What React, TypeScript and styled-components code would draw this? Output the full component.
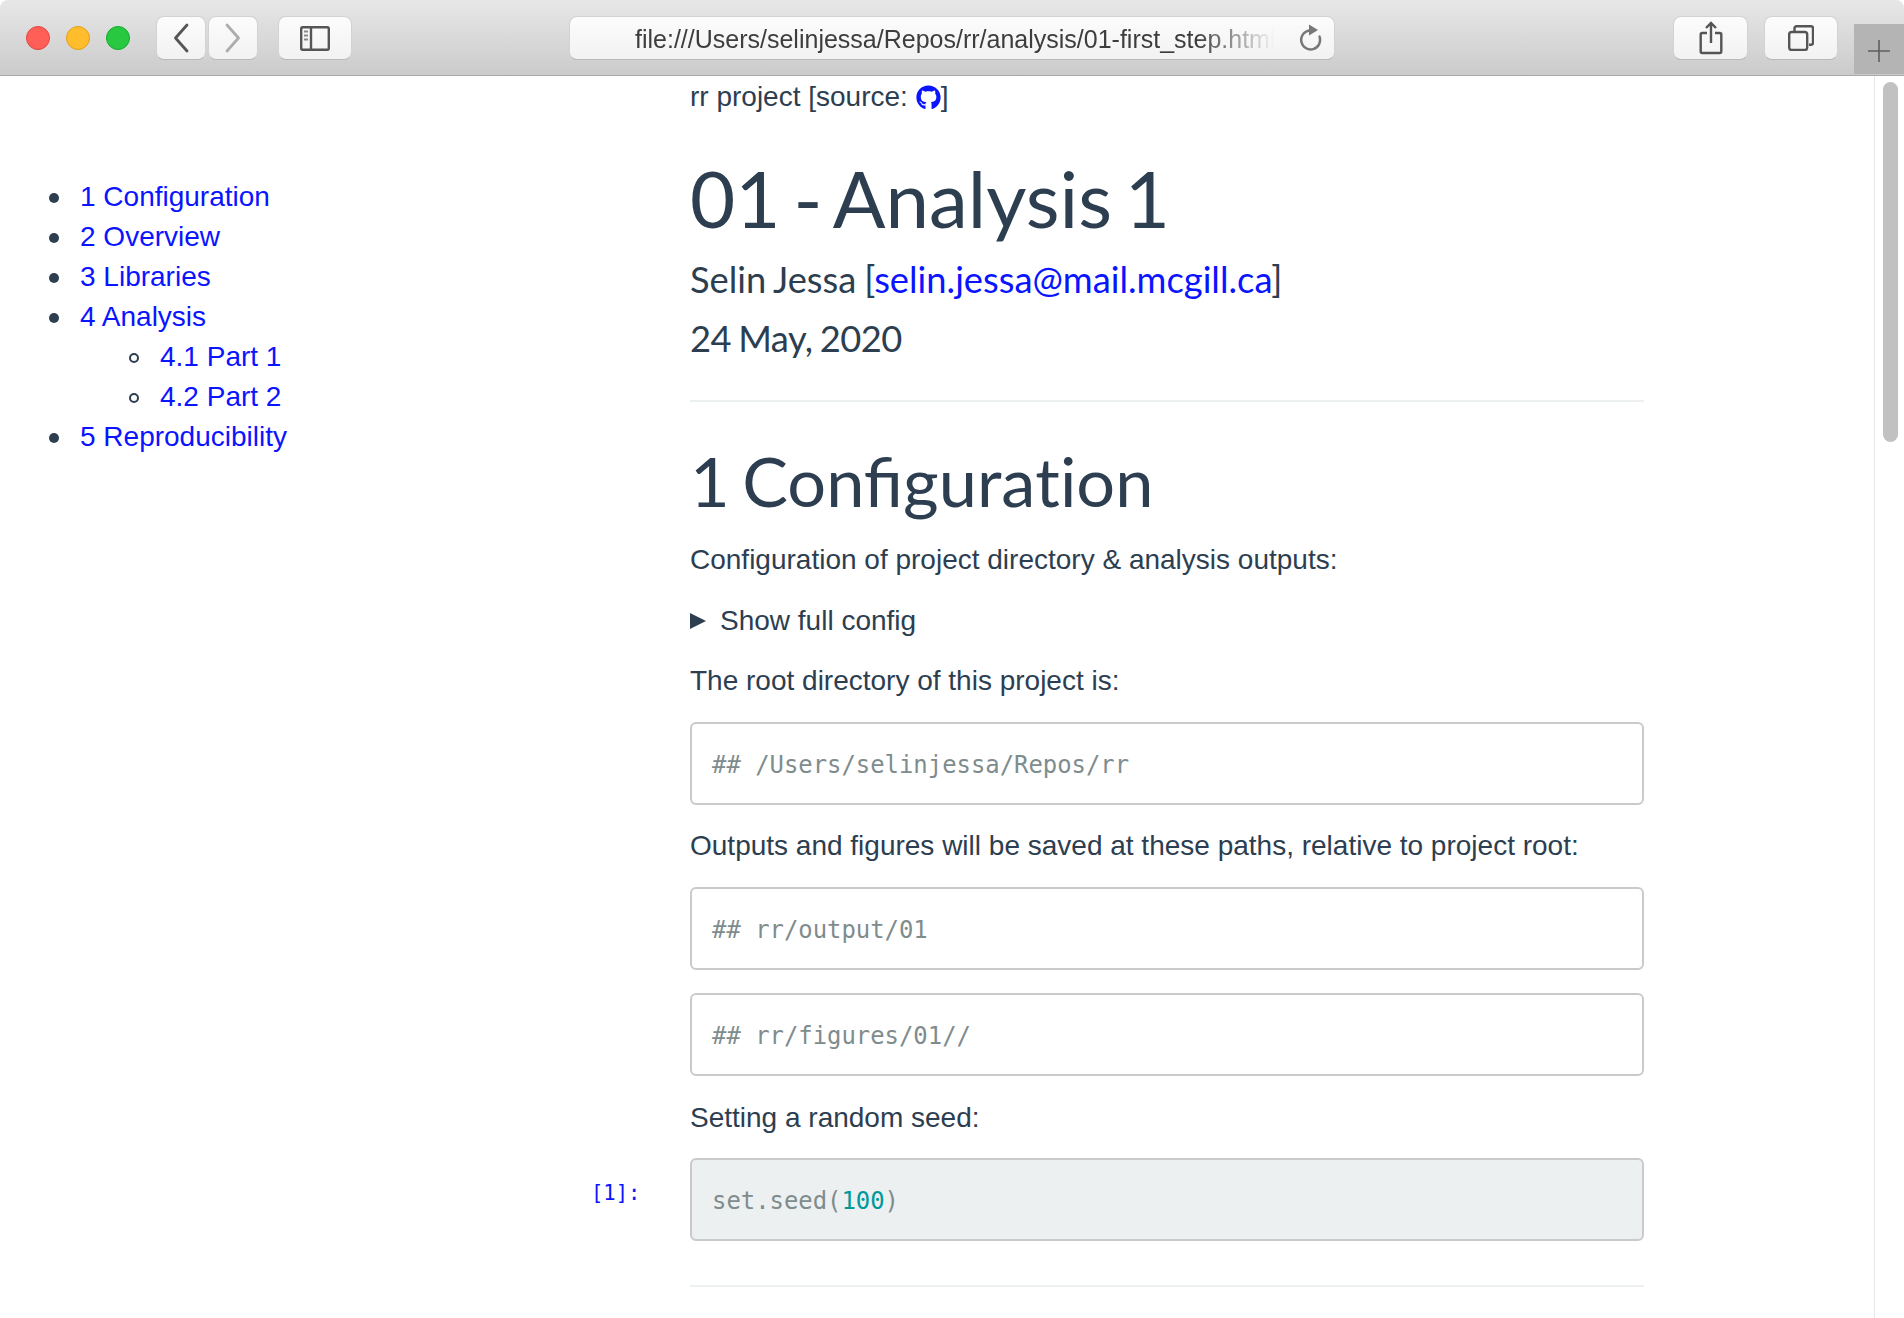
import React from 'react';
import styled, { createGlobalStyle } from 'styled-components';
import { FaGithub } from 'react-icons/fa';

const Global = createGlobalStyle`
  html, body { margin: 0; padding: 0; background: #fff; }
  body { font-family: "Liberation Sans", Arial, sans-serif; color: #2c3e50; }
  a { color: #0a14ff; text-decoration: none; }
`;

const Page = styled.div`
  width: 1904px; height: 1318px; overflow: hidden;
  display: flex; flex-direction: column; background: #fff;
`;

const Toolbar = styled.header`
  flex: none; height: 76px; box-sizing: border-box;
  display: flex; align-items: flex-start;
  padding: 16px 0 0 26px;
  background: linear-gradient(#e7e7e7, #cbcbcb);
  border-bottom: 1px solid #a9a9a9;
  border-radius: 8px 8px 0 0;
`;

const Lights = styled.div`
  display: flex; gap: 16px; margin-top: 10px; margin-right: 26px;
`;
const Light = styled.span<{ $c: string; $b: string }>`
  width: 24px; height: 24px; border-radius: 50%; box-sizing: border-box;
  background: ${p => p.$c}; border: 1px solid ${p => p.$b};
`;

const ToolButton = styled.div<{ $w: number; $ml?: number }>`
  flex: none; width: ${p => p.$w}px; height: 44px; margin-left: ${p => p.$ml ?? 0}px;
  box-sizing: border-box; display: flex; align-items: center; justify-content: center;
  background: linear-gradient(#fcfcfc, #f2f2f2);
  border: 1px solid #d2d2d2; border-bottom-color: #b8b8b8; border-radius: 8px;
`;

const Address = styled.div`
  flex: none; width: 766px; height: 44px; margin-left: 217px; box-sizing: border-box;
  display: flex; align-items: center; padding: 0 10px 0 65px; gap: 24px;
  background: linear-gradient(#fcfcfc, #f2f2f2);
  border: 1px solid #d2d2d2; border-bottom-color: #b8b8b8; border-radius: 8px;
`;
const Url = styled.div`
  flex: 1; min-width: 0; overflow: hidden; white-space: nowrap;
  font-size: 25px; line-height: 30px; padding-top: 2px; color: #3d3d3d;
  -webkit-mask-image: linear-gradient(to right, #000 88%, transparent 100%);
  mask-image: linear-gradient(to right, #000 88%, transparent 100%);
`;

const PlusTab = styled.div`
  flex: none; width: 50px; height: 50px; margin-left: 16px; margin-top: 8px;
  box-sizing: border-box; padding-top: 4px;
  display: flex; align-items: center; justify-content: center;
  background: #b4b4b4;
`;

const Body = styled.div`
  flex: 1; min-height: 0; display: flex;
`;

const Sidebar = styled.nav`
  flex: none; width: 690px; box-sizing: border-box; padding: 101px 0 0 40px;
`;
const Toc = styled.ul`
  margin: 0; padding: 0 0 0 40px; list-style: none; font-size: 28px; line-height: 40px;
`;
const TocItem = styled.li`
  position: relative;
  &::before {
    content: ""; position: absolute; left: -31px; top: 16px;
    width: 10px; height: 10px; border-radius: 50%; background: #2c3e50;
  }
`;
const SubToc = styled.ul`
  margin: 0; padding: 0 0 0 80px; list-style: none;
`;
const SubItem = styled.li`
  position: relative;
  &::before {
    content: ""; position: absolute; left: -31px; top: 16px; box-sizing: border-box;
    width: 10px; height: 10px; border-radius: 50%; border: 2px solid #2c3e50;
  }
`;

const Content = styled.main`
  flex: none; width: 954px;
`;

const Banner = styled.div`
  font-size: 28px; line-height: 40px; margin-top: 1px; display: flex; align-items: center;
  white-space: pre;
`;
const GithubLink = styled.a`
  display: inline-flex; font-size: 25px;
`;
const Title = styled.h1`
  margin: 33px 0 0; font-family: Lato, sans-serif; font-weight: 400;
  font-size: 78px; line-height: 96px; word-spacing: -7px;
`;
const Meta = styled.div`
  font-family: Lato, sans-serif; font-size: 36.3px; line-height: 50px; margin-top: 8px;
  word-spacing: -1.5px;
`;
const DateLine = styled(Meta)`
  margin-top: 9px; letter-spacing: -0.55px;
`;
const Rule = styled.hr<{ $mt: number }>`
  border: 0; height: 2px; background: #ecf0f1; margin: ${p => p.$mt}px 0 0;
`;
const Section = styled.h2`
  margin: 40px 0 0; font-family: Lato, sans-serif; font-weight: 400;
  font-size: 68.5px; line-height: 77px; word-spacing: -5px;
`;
const NoLigature = styled.span`
  letter-spacing: 0.01px;
`;
const Para = styled.p`
  margin: 21px 0 0; font-size: 28px; line-height: 40px;
`;
const Disclosure = styled.div`
  margin: 21px 0 0; font-size: 28px; line-height: 40px;
  display: flex; align-items: center; gap: 14px;
`;
const Arrow = styled.span`
  width: 0; height: 0;
  border-left: 16px solid #2c3e50; border-top: 8.5px solid transparent; border-bottom: 8.5px solid transparent;
`;
const RootLine = styled(Para)`
  margin-top: 20px;
`;
const SeedLine = styled(Para)`
  margin-top: 22px;
`;
const CodeBox = styled.pre<{ $source?: boolean }>`
  flex: 1; margin: 0; height: 83px; box-sizing: border-box; padding: 3px 20px 0;
  display: flex; align-items: center;
  font-family: "DejaVu Sans Mono", monospace; font-size: 23.9px; color: #7f8c8d;
  background: ${p => (p.$source ? '#ecf0f1' : '#fff')};
  border: 2px solid #c9cbcb; border-radius: 6px;
`;
const CodeRow = styled.div<{ $mt: number }>`
  display: flex; margin: ${p => p.$mt}px 0 0 -99px;
`;
const Prompt = styled.div`
  flex: none; width: 99px; box-sizing: border-box; padding-top: 20px;
  font-family: "DejaVu Sans Mono", monospace; font-size: 20.5px; line-height: 30px; color: #0a14ff;
`;
const Num = styled.span`
  color: #009999;
`;

const Scrollbar = styled.div`
  flex: none; width: 30px; margin-left: auto; box-sizing: border-box;
  padding: 6px 6px 0 8px; background: #fff; border-left: 1px solid #e8e8e8;
`;
const Thumb = styled.div`
  height: 360px; border-radius: 8px; background: #c1c1c1;
`;

const stroke = { fill: 'none', stroke: '#555', strokeWidth: 2.4 };

const items = [
  ['1 Configuration'],
  ['2 Overview'],
  ['3 Libraries'],
  ['4 Analysis', '4.1 Part 1', '4.2 Part 2'],
  ['5 Reproducibility'],
];

export default function App() {
  return (
    <Page>
      <Global />
      <Toolbar>
        <Lights>
          <Light $c="#ff5f57" $b="#e2463f" />
          <Light $c="#ffbd2e" $b="#e1a116" />
          <Light $c="#28c940" $b="#12ac28" />
        </Lights>
        <ToolButton $w={50}>
          <svg width="16" height="30" viewBox="0 0 16 30"><path d="M14 2 2.5 15 14 28" {...stroke} strokeWidth={2.8} strokeLinecap="round" strokeLinejoin="round" /></svg>
        </ToolButton>
        <ToolButton $w={50} $ml={2}>
          <svg width="16" height="30" viewBox="0 0 16 30"><path d="M2 2 13.5 15 2 28" {...stroke} stroke="#adadad" strokeWidth={2.8} strokeLinecap="round" strokeLinejoin="round" /></svg>
        </ToolButton>
        <ToolButton $w={74} $ml={20}>
          <svg width="30" height="25" viewBox="0 0 30 25">
            <rect x="1.2" y="1.2" width="27.6" height="22.6" rx="1.5" {...stroke} />
            <path d="M11 1v23" {...stroke} />
            <path d="M4 5.5h4M4 9.5h4M4 13.5h4" {...stroke} strokeWidth={2} stroke="#888" />
          </svg>
        </ToolButton>
        <Address>
          <Url>file:///Users/selinjessa/Repos/rr/analysis/01-first_step.html</Url>
          <svg width="26" height="30" viewBox="0 0 26 30">
            <path d="M11.5 7.5a9.5 9.5 0 1 0 10 6" fill="none" stroke="#777" strokeWidth="2.4" strokeLinecap="round" />
            <path d="M11 1.5 20 7l-9 5.5z" fill="#777" />
          </svg>
        </Address>
        <ToolButton $w={75} $ml={338}>
          <svg width="24" height="34" viewBox="0 0 24 34">
            <path d="M8 12H3.2a1.5 1.5 0 0 0-1.5 1.5v17A1.5 1.5 0 0 0 3.2 32h17.6a1.5 1.5 0 0 0 1.5-1.5v-17a1.5 1.5 0 0 0-1.5-1.5H16" {...stroke} />
            <path d="M12 2v20M7 7l5-5 5 5" {...stroke} />
          </svg>
        </ToolButton>
        <ToolButton $w={74} $ml={16}>
          <svg width="26" height="26" viewBox="0 0 26 26">
            <rect x="1.2" y="7" width="18" height="18" rx="2.5" {...stroke} />
            <path d="M6.5 6V3.2a2 2 0 0 1 2-2H23a2 2 0 0 1 2 2v14.6a2 2 0 0 1-2 2h-2" {...stroke} />
          </svg>
        </ToolButton>
        <PlusTab>
          <svg width="22" height="22" viewBox="0 0 22 22"><path d="M11 0v22M0 11h22" fill="none" stroke="#5f5f5f" strokeWidth="1.6" /></svg>
        </PlusTab>
      </Toolbar>
      <Body>
        <Sidebar>
          <Toc>
            {items.map(([head, ...subs]) => (
              <TocItem key={head}>
                <a href="#">{head}</a>
                {subs.length > 0 && (
                  <SubToc>
                    {subs.map(s => (
                      <SubItem key={s}><a href="#">{s}</a></SubItem>
                    ))}
                  </SubToc>
                )}
              </TocItem>
            ))}
          </Toc>
        </Sidebar>
        <Content>
          <Banner>rr project [source: <GithubLink href="#"><FaGithub /></GithubLink>]</Banner>
          <Title>01 - Analysis 1</Title>
          <Meta>Selin Jessa [<a href="#">selin.jessa@mail.mcgill.ca</a>]</Meta>
          <DateLine>24 May, 2020</DateLine>
          <Rule $mt={37} />
          <Section>1 Configura<NoLigature>ti</NoLigature>on</Section>
          <Para>Configuration of project directory &amp; analysis outputs:</Para>
          <Disclosure><Arrow />Show full config</Disclosure>
          <RootLine>The root directory of this project is:</RootLine>
          <CodeRow $mt={21}><Prompt /><CodeBox>## /Users/selinjessa/Repos/rr</CodeBox></CodeRow>
          <Para>Outputs and figures will be saved at these paths, relative to project root:</Para>
          <CodeRow $mt={21}><Prompt /><CodeBox>## rr/output/01</CodeBox></CodeRow>
          <CodeRow $mt={23}><Prompt /><CodeBox>## rr/figures/01//</CodeBox></CodeRow>
          <SeedLine>Setting a random seed:</SeedLine>
          <CodeRow $mt={20}>
            <Prompt>[1]:</Prompt>
            <CodeBox $source>set.seed(<Num>100</Num>)</CodeBox>
          </CodeRow>
          <Rule $mt={44} />
        </Content>
        <Scrollbar><Thumb /></Scrollbar>
      </Body>
    </Page>
  );
}
